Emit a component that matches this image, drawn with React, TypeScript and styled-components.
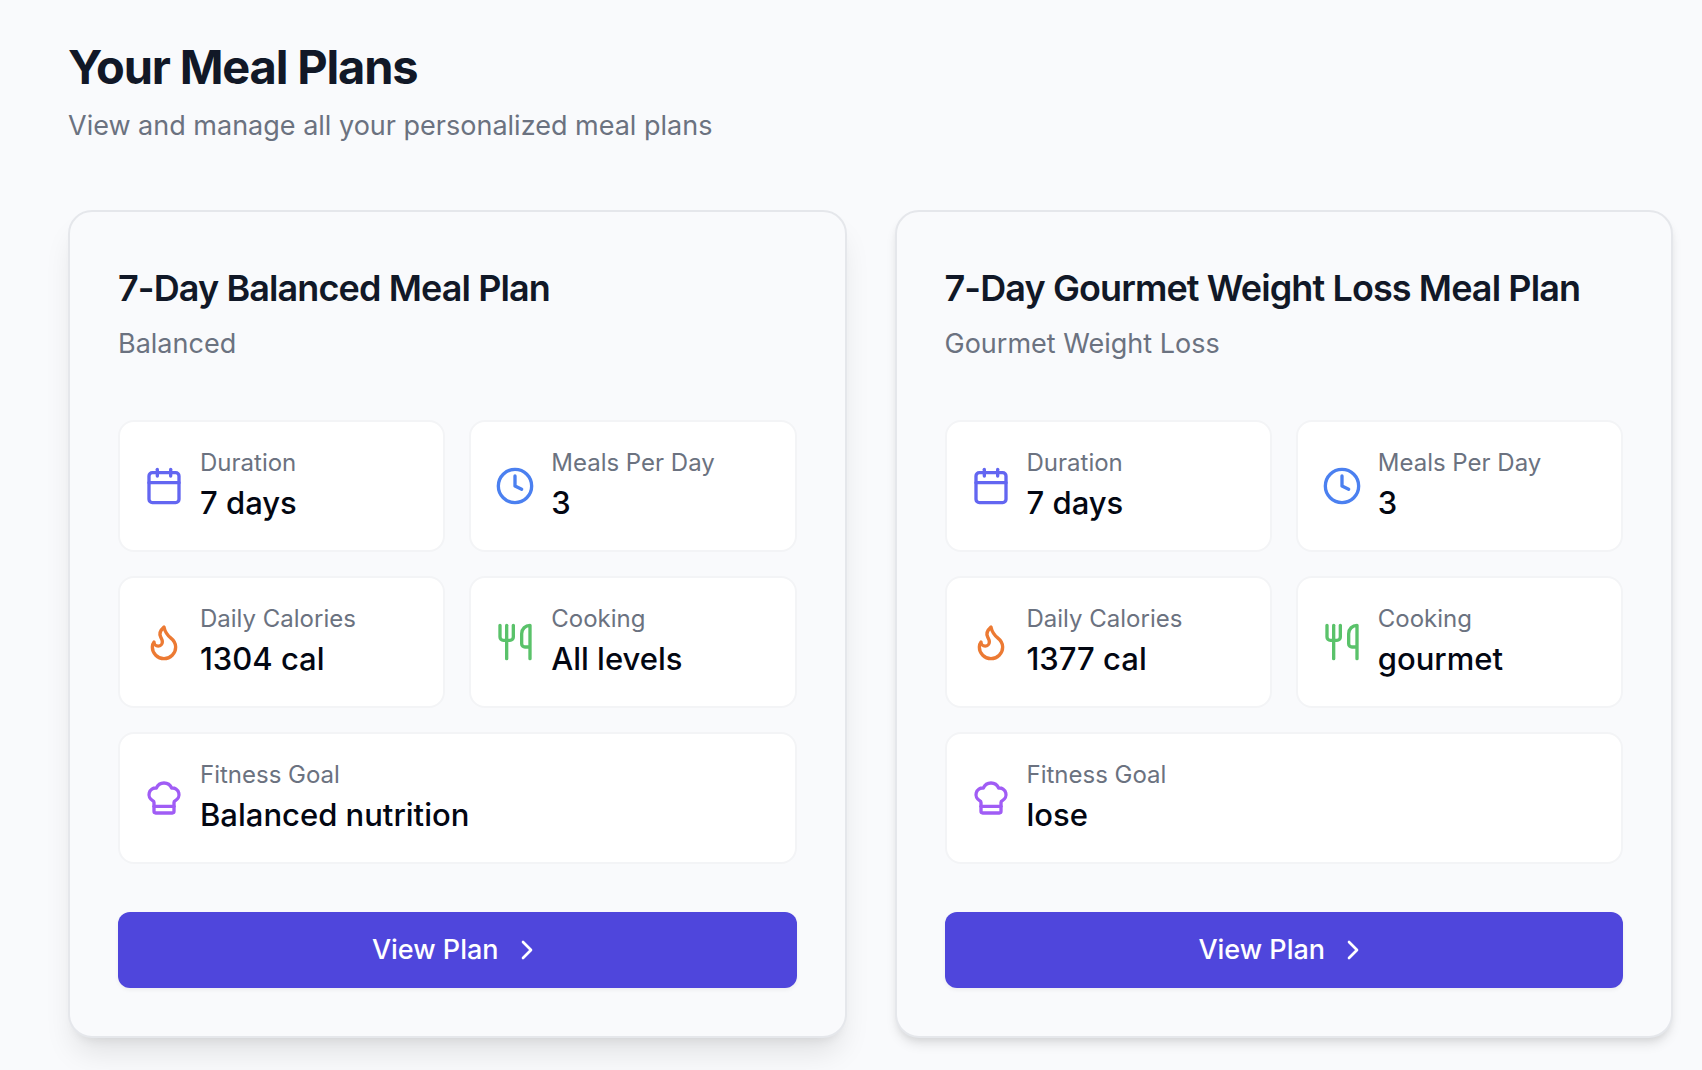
import React from "react";
import styled, { createGlobalStyle } from "styled-components";
import { Calendar, ChefHat, ChevronRight, Clock } from "lucide-react";

const GlobalStyle = createGlobalStyle`
  *, *::before, *::after { box-sizing: border-box; }
  body {
    margin: 0;
    background: #f9fafc;
    color: #030712;
    font-family: Inter, "Liberation Sans", sans-serif;
    -webkit-font-smoothing: antialiased;
  }
  h1, h2, p, dl, dt, dd { margin: 0; }
`;

const Page = styled.main`
  padding: 36px 29px 32px 68px;
`;

const Header = styled.header`
  margin-bottom: 64px;
`;

const PageTitle = styled.h1`
  font-size: 47px;
  line-height: 62px;
  font-weight: 700;
  letter-spacing: -0.025em;
  color: #111827;
`;

const Subtitle = styled.p`
  margin-top: 8px;
  font-size: 27px;
  line-height: 40px;
  color: #6b7280;
`;

const PlanGrid = styled.div`
  display: grid;
  grid-template-columns: repeat(2, minmax(0, 1fr));
  gap: 48px;
`;

const Card = styled.article<{ $raised?: boolean }>`
  padding: 48px;
  border: 2px solid #e5e7eb;
  border-radius: 24px;
  background: #f9fafc;
  box-shadow: ${({ $raised }) =>
    $raised
      ? "0 20px 30px -6px rgba(0, 0, 0, 0.1), 0 8px 12px -8px rgba(0, 0, 0, 0.1)"
      : "0 8px 12px -2px rgba(0, 0, 0, 0.1), 0 4px 8px -4px rgba(0, 0, 0, 0.1)"};
`;

const CardTitle = styled.h2`
  font-size: 36px;
  line-height: 56px;
  font-weight: 600;
  letter-spacing: -0.025em;
  color: #111827;
`;

const Stats = styled.dl`
  display: grid;
  grid-template-columns: repeat(2, minmax(0, 1fr));
  gap: 24px;
  padding: 56px 0 48px;
`;

const Tile = styled.div<{ $wide?: boolean }>`
  display: flex;
  align-items: center;
  gap: 16px;
  padding: 23px 24px;
  border: 2px solid #f3f4f6;
  border-radius: 16px;
  background: #ffffff;
  grid-column: ${({ $wide }) => ($wide ? "1 / -1" : "auto")};
`;

const IconBox = styled.span<{ $color: string }>`
  display: flex;
  flex: none;
  color: ${({ $color }) => $color};
`;

const StatText = styled.div`
  padding-top: 2px;
`;

const Label = styled.dt`
  font-size: 24px;
  line-height: 32px;
  color: #6b7280;
`;

const Value = styled.dd`
  font-size: 31px;
  line-height: 48px;
  font-weight: 500;
`;

const ViewButton = styled.button`
  display: flex;
  align-items: center;
  justify-content: center;
  gap: 12px;
  width: 100%;
  padding: 18px 32px;
  border: 0;
  border-radius: 12px;
  background: #4f46dc;
  color: #ffffff;
  font: inherit;
  font-size: 27px;
  line-height: 40px;
  font-weight: 500;
  box-shadow: 0 2px 4px rgba(0, 0, 0, 0.05);
  cursor: pointer;
`;

const strokeProps = {
  width: 40,
  height: 40,
  viewBox: "0 0 24 24",
  fill: "none",
  stroke: "currentColor",
  strokeWidth: 2,
  strokeLinecap: "round" as const,
  strokeLinejoin: "round" as const,
  "aria-hidden": true,
};

const FlameIcon = () => (
  <svg {...strokeProps}>
    <path d="M8.5 14.5A2.5 2.5 0 0 0 11 12c0-1.38-.5-2-1-3-1.072-2.143-.224-4.054 2-6 .5 2.5 2 4.9 4 6.5 2 1.6 3 3.5 3 5.5a7 7 0 1 1-14 0c0-1.153.433-2.294 1-3a2.5 2.5 0 0 0 2.5 2.5z" />
  </svg>
);

const UtensilsIcon = () => (
  <svg {...strokeProps}>
    <path d="M3 2v7c0 1.1.9 2 2 2h4a2 2 0 0 0 2-2V2" />
    <path d="M7 2v20" />
    <path d="M21 15V2a5 5 0 0 0-5 5v6c0 1.1.9 2 2 2h3Zm0 0v7" />
  </svg>
);

interface StatProps {
  icon: React.ReactNode;
  color: string;
  label: string;
  value: string;
  wide?: boolean;
}

const Stat = ({ icon, color, label, value, wide }: StatProps) => (
  <Tile $wide={wide}>
    <IconBox $color={color}>{icon}</IconBox>
    <StatText>
      <Label>{label}</Label>
      <Value>{value}</Value>
    </StatText>
  </Tile>
);

interface Plan {
  title: string;
  kind: string;
  duration: string;
  meals: string;
  calories: string;
  cooking: string;
  goal: string;
  raised?: boolean;
}

const plans: Plan[] = [
  {
    title: "7-Day Balanced Meal Plan",
    kind: "Balanced",
    duration: "7 days",
    meals: "3",
    calories: "1304 cal",
    cooking: "All levels",
    goal: "Balanced nutrition",
    raised: true,
  },
  {
    title: "7-Day Gourmet Weight Loss Meal Plan",
    kind: "Gourmet Weight Loss",
    duration: "7 days",
    meals: "3",
    calories: "1377 cal",
    cooking: "gourmet",
    goal: "lose",
  },
];

const PlanCard = ({ plan }: { plan: Plan }) => (
  <Card $raised={plan.raised}>
    <CardTitle>{plan.title}</CardTitle>
    <Subtitle>{plan.kind}</Subtitle>
    <Stats>
      <Stat icon={<Calendar size={40} />} color="#6366f1" label="Duration" value={plan.duration} />
      <Stat icon={<Clock size={40} />} color="#4b80f0" label="Meals Per Day" value={plan.meals} />
      <Stat icon={<FlameIcon />} color="#ec7a33" label="Daily Calories" value={plan.calories} />
      <Stat icon={<UtensilsIcon />} color="#5ac26a" label="Cooking" value={plan.cooking} />
      <Stat icon={<ChefHat size={40} />} color="#a05cf5" label="Fitness Goal" value={plan.goal} wide />
    </Stats>
    <ViewButton type="button">
      View Plan
      <ChevronRight size={32} />
    </ViewButton>
  </Card>
);

export default function App() {
  return (
    <>
      <GlobalStyle />
      <Page>
        <Header>
          <PageTitle>Your Meal Plans</PageTitle>
          <Subtitle>View and manage all your personalized meal plans</Subtitle>
        </Header>
        <PlanGrid>
          {plans.map((plan) => (
            <PlanCard key={plan.title} plan={plan} />
          ))}
        </PlanGrid>
      </Page>
    </>
  );
}
